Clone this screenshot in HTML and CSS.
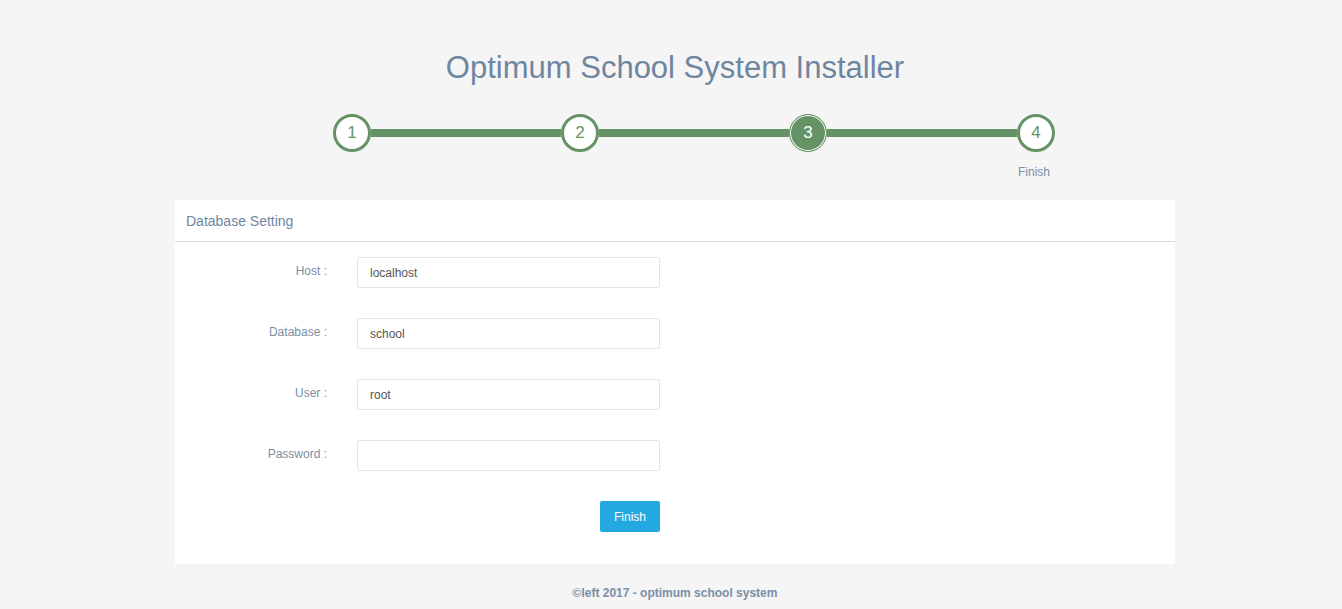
FILE: index.html
```html
<!DOCTYPE html>
<html>
<head>
<meta charset="utf-8">
<link rel="stylesheet" href="styles.css">
</head>
<body>
<div class="page">
  <h1 class="title">Optimum School System Installer</h1>
  <div class="stepper">
    <div class="step"><div class="circle">1</div></div>
    <div class="line"></div>
    <div class="step"><div class="circle">2</div></div>
    <div class="line"></div>
    <div class="step"><div class="circle active">3</div></div>
    <div class="line"></div>
    <div class="step"><div class="circle">4</div><div class="step-label">Finish</div></div>
  </div>
  <div class="panel">
    <div class="panel-head">Database Setting</div>
    <div class="panel-body">
      <div class="row"><label class="lbl">Host :</label><input class="field" type="text" value="localhost"></div>
      <div class="row"><label class="lbl">Database :</label><input class="field" type="text" value="school"></div>
      <div class="row"><label class="lbl">User :</label><input class="field" type="text" value="root"></div>
      <div class="row"><label class="lbl">Password :</label><input class="field" type="password" value=""></div>
      <div class="row btn-row"><button class="btn">Finish</button></div>
    </div>
  </div>
  <div class="footer">©left 2017 - optimum school system</div>
</div>
</body>
</html>
```
FILE: styles.css
```css
html, body {
  margin: 0;
  padding: 0;
  background: #f5f5f5;
  font-family: "Liberation Sans", Arial, sans-serif;
}
.page {
  width: 1000px;
  margin-left: calc(50% - 496px);
}
.title {
  margin: 0;
  padding-top: 50px;
  font-size: 31px;
  line-height: 36px;
  font-weight: normal;
  color: #6f86a0;
  text-align: center;
}
.stepper {
  display: flex;
  align-items: flex-start;
  padding: 28px 120px 21px 158px;
}
.step {
  width: 38px;
  display: flex;
  flex-direction: column;
  align-items: center;
}
.circle {
  width: 38px;
  height: 38px;
  box-sizing: border-box;
  border: 3px solid #659365;
  border-radius: 50%;
  background: #fff;
  color: #659365;
  font-size: 17px;
  line-height: 32px;
  text-align: center;
}
.circle.active {
  background: #659365;
  color: #fff;
  border: 1px solid #659365;
  box-shadow: inset 0 0 0 1px #fff;
  line-height: 36px;
}
.step-label {
  margin-top: 13px;
  margin-left: -4px;
  font-size: 12px;
  line-height: 14px;
  color: #7a8ea6;
  white-space: nowrap;
}
.line {
  flex: 1;
  height: 8px;
  margin-top: 15px;
  background: #659365;
}
.panel {
  background: #fff;
}
.panel-head {
  height: 41px;
  line-height: 43px;
  padding-left: 11px;
  font-size: 14px;
  color: #6f86a0;
  border-bottom: 1px solid #dcdcdc;
}
.panel-body {
  padding: 15px 0 32px;
  display: flex;
  flex-direction: column;
  gap: 30px;
}
.row {
  display: flex;
  align-items: flex-start;
}
.lbl {
  width: 152px;
  text-align: right;
  font-size: 12px;
  line-height: 17px;
  padding-top: 6px;
  color: #7a8ea6;
}
.field {
  margin-left: 30px;
  width: 303px;
  height: 31px;
  box-sizing: border-box;
  border: 1px solid #e5e5e5;
  border-radius: 2px;
  padding: 0 12px;
  font-family: "Liberation Sans", Arial, sans-serif;
  font-size: 12px;
  color: #555;
  outline: none;
}
.btn-row {
  justify-content: flex-start;
  padding-left: 425px;
}
.btn {
  width: 60px;
  height: 31px;
  border: none;
  border-radius: 2px;
  background: #23a9e1;
  color: #fff;
  font-family: "Liberation Sans", Arial, sans-serif;
  font-size: 12px;
  padding: 0;
}
.footer {
  text-align: center;
  font-size: 12px;
  font-weight: bold;
  color: #7a8ea6;
  padding-top: 22px;
  line-height: 14px;
}
```
